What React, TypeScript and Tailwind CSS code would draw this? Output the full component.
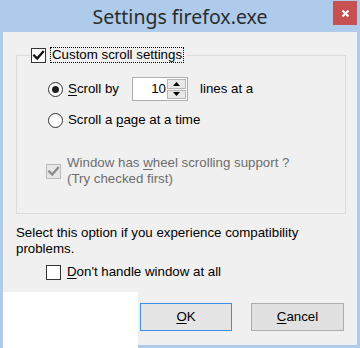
import React from "react";

function CheckMark({ color }: { color: string }) {
  return (
    <svg width="13" height="13" viewBox="0 0 13 13">
      <path d="M2.2 6.6 L5.2 9.6 L11 2.8" fill="none" stroke={color} strokeWidth="2.3" strokeLinecap="square" />
    </svg>
  );
}

function Box({ checked, disabled }: { checked?: boolean; disabled?: boolean }) {
  return (
    <div
      className={
        disabled
          ? "w-[15px] h-[15px] shrink-0 border border-[#bcbcbc] bg-[#e6e6e6] flex items-center justify-center"
          : "w-[15px] h-[15px] shrink-0 border border-[#333333] bg-white flex items-center justify-center"
      }
    >
      {checked ? <CheckMark color={disabled ? "#8d8d8d" : "#111111"} /> : null}
    </div>
  );
}

function Radio({ checked }: { checked?: boolean }) {
  return (
    <div className="w-[15px] h-[15px] shrink-0 rounded-full border border-[#333333] bg-white flex items-center justify-center">
      {checked ? <div className="w-[7px] h-[7px] rounded-full bg-[#1e1e1e]" /> : null}
    </div>
  );
}

export default function App() {
  return (
    <div
      className="relative w-[360px] h-[348px] overflow-hidden bg-[#aecbeb] flex flex-col text-black"
      style={{ fontFamily: '"Liberation Sans", Arial, sans-serif' }}
    >
      {/* Title bar */}
      <div className="h-[32px] shrink-0 grid grid-cols-[1fr_auto_1fr]">
        <div />
        <div
          className="flex items-center pt-[1px] text-[19.5px] text-[#2b2b2b]"
          style={{ fontFamily: '"Noto Sans", "Open Sans", sans-serif' }}
        >
          Settings firefox.exe
        </div>
        <div className="flex justify-end items-start pt-[1px] pr-[3px]">
          <div className="w-[24px] h-[24px] bg-[#c75050] flex items-center justify-center">
            <svg width="9" height="9" viewBox="0 0 9 9">
              <path d="M1.5 1.5 L7.5 7.5 M7.5 1.5 L1.5 7.5" stroke="#ffffff" strokeWidth="2" />
            </svg>
          </div>
        </div>
      </div>

      {/* Body */}
      <div className="flex-1 ml-[3px] mr-[3px] mb-[3px] bg-[#f0f0f0] flex flex-col text-[13.3px] leading-[16px]">
        <fieldset className="mt-[15px] ml-[13px] w-[330px] border border-[#dcdcdc] pb-[26px]">
          <legend className="ml-[14px] h-[16px] flex items-center gap-[4px] pr-[3px]">
            <Box checked />
            <span className="h-[16px] border border-dotted border-black pl-[1px] pr-[1px] flex items-center">
              Custom scroll settings
            </span>
          </legend>

          <div className="mt-[14px] h-[24px] flex items-center pl-[31px]">
            <Radio checked />
            <span className="ml-[5px] w-[64px]">
              <span className="underline underline-offset-2">S</span>croll by
            </span>
            <div className="w-[56px] h-[24px] border border-[#abadb3] bg-white flex items-stretch">
              <span className="flex-1 flex items-center justify-end pr-[1px]">10</span>
              <div className="w-[20px] flex flex-col py-[1px] pr-[1px] gap-[1px]">
                <div className="flex-1 bg-[#e9e9e9] border border-[#b5b5b5] flex items-center justify-center">
                  <svg width="7" height="4" viewBox="0 0 7 4">
                    <path d="M0 4 L3.5 0 L7 4 Z" fill="#000" />
                  </svg>
                </div>
                <div className="flex-1 bg-[#e9e9e9] border border-[#b5b5b5] flex items-center justify-center">
                  <svg width="7" height="4" viewBox="0 0 7 4">
                    <path d="M0 0 L7 0 L3.5 4 Z" fill="#000" />
                  </svg>
                </div>
              </div>
            </div>
            <span className="ml-[12px]">lines at a</span>
          </div>

          <div className="mt-[11px] h-[16px] flex items-center pl-[31px]">
            <Radio />
            <span className="ml-[5px]">
              Scroll a <span className="underline underline-offset-2">p</span>age at a time
            </span>
          </div>

          <div className="mt-[27px] flex items-center pl-[29px] gap-[6px] text-[#6d6d6d]">
            <Box checked disabled />
            <div className="flex flex-col">
              <span>
                Window has <span className="underline underline-offset-2">w</span>heel scrolling support ?
              </span>
              <span>(Try checked first)</span>
            </div>
          </div>
        </fieldset>

        <p className="mt-[11px] ml-[13px] w-[320px]">
          Select this option if you experience compatibility problems.
        </p>

        <div className="mt-[7px] h-[16px] flex items-center pl-[43px] gap-[6px]">
          <Box />
          <span>
            <span className="underline underline-offset-2">D</span>on't handle window at all
          </span>
        </div>

        <div className="mt-[23px] flex justify-end pr-[13px] gap-[19px]">
          <div className="w-[92px] h-[28px] border border-[#3c8fe6] bg-[#e5e5e5] flex items-center justify-center">
            <span>
              <span className="underline underline-offset-2">O</span>K
            </span>
          </div>
          <div className="w-[93px] h-[28px] border border-[#adadad] bg-[#e1e1e1] flex items-center justify-center">
            <span>
              <span className="underline underline-offset-2">C</span>ancel
            </span>
          </div>
        </div>
      </div>

      {/* White patch covering the lower-left corner */}
      <div className="absolute left-[3px] top-[292px] w-[135px] h-[56px] bg-white" />
    </div>
  );
}
